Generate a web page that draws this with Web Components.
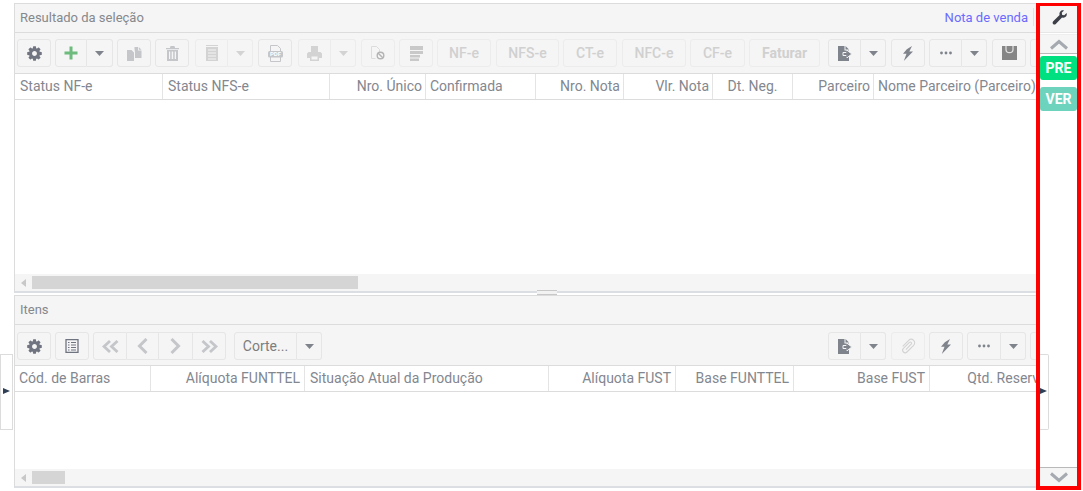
<!DOCTYPE html>
<html lang="pt"><head><meta charset="utf-8"><title>Nota de venda</title>
<style>html,body{margin:0;height:491px;overflow:hidden;background:#fff;font-family:Roboto,"Liberation Sans",sans-serif}</style>
</head><body>
<x-app>
  <x-panel slot="main" title-text="Resultado da seleção" link="Nota de venda" body="174" thumb="326">
    <x-toolbar>
      <x-btn w="34" icon="gear"></x-btn>
      <x-btn w="32" icon="plus" ml="4" group="l"></x-btn><x-btn w="26" icon="caret" group="r"></x-btn>
      <x-btn w="34" icon="copy" ml="4" off="1"></x-btn>
      <x-btn w="34" icon="trash" ml="4" off="1"></x-btn>
      <x-btn w="33" icon="lines" ml="6" group="l" off="2"></x-btn><x-btn w="25" icon="caret" group="r" off="2"></x-btn>
      <x-btn w="34" icon="pdf" ml="5" off="1"></x-btn>
      <x-btn w="33" icon="print" ml="6" group="l" off="2"></x-btn><x-btn w="25" icon="caret" group="r" off="2"></x-btn>
      <x-btn w="34" icon="nodoc" ml="5" off="2"></x-btn>
      <x-btn w="34" icon="stack" ml="4" off="2"></x-btn>
      <x-btn w="54" ml="4" off="2">NF-e</x-btn>
      <x-btn w="63" ml="5" off="2">NFS-e</x-btn>
      <x-btn w="54" ml="4" off="2">CT-e</x-btn>
      <x-btn w="64" ml="5" off="2">NFC-e</x-btn>
      <x-btn w="55" ml="4" off="2">CF-e</x-btn>
      <x-btn w="71" ml="4" off="2" bold="1">Faturar</x-btn>
      <x-btn w="33" icon="export" ml="8" group="l"></x-btn><x-btn w="25" icon="caret" group="r"></x-btn>
      <x-btn w="34" icon="bolt" ml="5"></x-btn>
      <x-btn w="33" icon="dots" ml="4" group="l"></x-btn><x-btn w="25" icon="caret" group="r"></x-btn>
      <x-btn w="34" icon="bag" ml="5"></x-btn>
      <x-btn w="34" ml="4"></x-btn>
    </x-toolbar>
    <x-grid-head cols="148:l5:Status NF-e,167:l5:Status NFS-e,96:r3:Nro. Único,110:l4:Confirmada,88:r3:Nro. Nota,89:r3:Vlr. Nota,80:ctr:Dt. Neg.,81:r3:Parceiro,200:l4:Nome Parceiro (Parceiro)"></x-grid-head>
  </x-panel>
  <x-splitter slot="main"></x-splitter>
  <x-panel slot="main" title-text="Itens" body="77" thumb="33">
    <x-toolbar top="7">
      <x-btn w="34" icon="gear"></x-btn>
      <x-btn w="34" icon="sheet" ml="4"></x-btn>
      <x-btn w="34" icon="first" ml="4" group="l" off="1"></x-btn><x-btn w="32" icon="prev" group="m" off="1"></x-btn><x-btn w="34" icon="next" group="m" off="1"></x-btn><x-btn w="33" icon="last" group="r" off="1"></x-btn>
      <x-btn w="63" ml="8" group="l" plain="1">Corte...</x-btn><x-btn w="25" icon="caret" group="r"></x-btn>
      <x-btn w="33" icon="export" ml="506" group="l"></x-btn><x-btn w="25" icon="caret" group="r"></x-btn>
      <x-btn w="34" icon="clip" ml="5" off="2"></x-btn>
      <x-btn w="34" icon="bolt" ml="4"></x-btn>
      <x-btn w="34" icon="dots" ml="4" group="l"></x-btn><x-btn w="25" icon="caret" group="r"></x-btn>
      <x-btn w="34" ml="4"></x-btn>
    </x-toolbar>
    <x-grid-head cols="136:l4:Cód. de Barras,154:r4:Alíquota FUNTTEL,244:l5:Situação Atual da Produção,127:r4:Alíquota FUST,118:r4:Base FUNTTEL,136:r4:Base FUST,137:r4:Qtd. Reservada"></x-grid-head>
  </x-panel>
  <x-sidebar slot="side">
    <x-badge color="#00e080">PRE</x-badge>
    <x-badge color="#6dd3bd">VER</x-badge>
  </x-sidebar>
  <x-handle slot="over" side="left"></x-handle>
  <x-handle slot="over" side="right"></x-handle>
</x-app>
<script>
const ICONS={
gear:'<svg width="17" height="17" viewBox="0 0 1792 1792"><path fill="#6f7480" d="M1152 896q0-106-75-181t-181-75-181 75-75 181 75 181 181 75 181-75 75-181zm512-109v222q0 12-8 23t-20 13l-185 28q-19 54-39 91 35 50 107 138 10 12 10 25t-9 23q-27 37-99 108t-94 71q-12 0-26-9l-138-108q-44 23-91 38-16 136-29 186-7 28-36 28h-222q-14 0-24.500-8.500t-11.500-21.500l-28-184q-49-16-90-37l-141 107q-10 9-25 9-14 0-25-11-126-114-165-168-7-10-7-23 0-12 8-23 15-21 51-66.500t54-70.500q-27-50-41-99l-183-27q-13-2-21-12.500t-8-23.500v-222q0-12 8-23t19-13l186-28q14-46 39-92-40-57-107-138-10-12-10-24 0-10 9-23 26-36 98.500-107.500t94.500-71.500q13 0 26 10l138 107q44-23 91-38 16-136 29-186 7-28 36-28h222q14 0 24.500 8.500t11.500 21.500l28 184q49 16 90 37l142-107q9-9 24-9 13 0 25 10 129 119 165 170 7 8 7 22 0 12-8 23-15 21-51 66.500t-54 70.500q26 50 41 98l183 28q13 2 21 12.500t8 23.500z"/></svg>',
plus:'<svg width="14" height="14" viewBox="0 0 14 14"><path fill="#6dbb7d" d="M5.500 .5h3v5H13.500v3H8.500v5h-3v-5H.5v-3h5z"/></svg>',
caret:'<svg width="9" height="5" viewBox="0 0 9 5"><path fill="currentColor" d="M0 0h9L4.500 5z"/></svg>',
copy:'<svg width="15" height="15" viewBox="0 0 15 15"><path fill="currentColor" d="M0 4h4.500l2.500 2.500V15H0zM7.500 3V1h3.500v3.500h3.500V12H8V6z"/><path fill="currentColor" d="M11.800 1l2.700 2.800h-2.700z"/></svg>',
trash:'<svg width="13" height="15" viewBox="0 0 13 15"><path fill="currentColor" d="M4.500 0h4l.6 2H13v1.300H0V2h3.900zM1 4h11v11H1zm2 1.500V13h1.200V5.500zm2.700 0V13h1.500V5.500zm3 0V13H10V5.500z" fill-rule="evenodd"/></svg>',
lines:'<svg width="12" height="16" viewBox="0 0 12 16"><path fill="currentColor" fill-rule="evenodd" d="M0 0h12v1H0zM0 2h12v14H0zM2 4.500v1h8v-1zm0 3v1h8v-1zm0 3v1h8v-1zm0 3v1h8v-1z"/></svg>',
pdf:'<svg width="15" height="17" viewBox="0 0 15 17"><path fill="none" stroke="currentColor" d="M2.500 6V.5h7l3 3V6M2.500 12v4.500h10V12"/><rect y="6" width="15" height="6.500" rx="1.500" fill="currentColor"/><text x="7.500" y="11.300" font-size="6" font-family="Roboto" font-weight="700" text-anchor="middle" fill="#fff">PDF</text></svg>',
print:'<svg width="15" height="15" viewBox="0 0 15 15"><path fill="currentColor" d="M4 0h7v6h2.500L15 7.500V12h-3v3H3v-3H0V7.500L1.500 6H4zm.5 10.500V13.500h6v-3z" fill-rule="evenodd"/></svg>',
nodoc:'<svg width="14" height="14" viewBox="0 0 14 14"><path fill="none" stroke="#dcdcdc" d="M.5.5h5l3 3v3M.5.5v12h4"/><circle cx="9.500" cy="9.500" r="3.300" fill="none" stroke="#b4b4b4" stroke-width="1.400"/><path d="M7.200 7.200l4.600 4.600" stroke="#b4b4b4" stroke-width="1.400"/></svg>',
stack:'<svg width="13" height="15" viewBox="0 0 13 15"><path fill="#c9c9c9" d="M0 0h13v4H0zM0 5h13v3H0zM0 9h10v2.500H0zM0 12.500h9V15H0z"/></svg>',
export:'<svg width="14" height="15" viewBox="0 0 14 15"><path fill="currentColor" d="M0 0h6.500v4.500H11V15H0z"/><path fill="currentColor" d="M7.500 0L11 3.500H7.500z"/><path fill="currentColor" stroke="#f5f5f5" stroke-width="1" d="M5 6.500h4V4.200l4.800 3.800L9 11.800V9.500H5z"/><path stroke="currentColor" stroke-width="1.500" d="M9 5v6"/></svg>',
bolt:'<svg width="10" height="15" viewBox="0 0 10 15"><path fill="currentColor" d="M9 0L6.300 5.500H10L.8 15l2.700-7.200H0L3.800 3.300z"/></svg>',
dots:'<svg width="12" height="4" viewBox="0 0 12 4"><circle cx="1.500" cy="2" r="1.400" fill="currentColor"/><circle cx="6" cy="2" r="1.400" fill="currentColor"/><circle cx="10.500" cy="2" r="1.400" fill="currentColor"/></svg>',
bag:'<svg width="15" height="14" viewBox="0 0 15 14"><rect width="15" height="14" fill="#868686"/><path fill="none" stroke="#e2e2e2" stroke-width="1.200" d="M4 0v3.500c0 4.200 7 4.200 7 0V0"/></svg>',
sheet:'<svg width="14" height="14" viewBox="0 0 14 14"><path fill="none" stroke="#6f7480" stroke-width="1.300" d="M1 .7h12v12.600H1z"/><path stroke="#6f7480" stroke-width="1.200" d="M3 3.500h1.500M6 3.500h5M3 6h1.500M6 6h5M3 8.500h1.500M6 8.500h5M3 11h1.500M6 11h5"/></svg>',
first:'<svg width="17" height="13" viewBox="0 0 17 13"><path fill="none" stroke="currentColor" stroke-width="2.800" d="M8 1L2 6.500 8 12M15.500 1L9.500 6.500l6 5.500"/></svg>',
prev:'<svg width="11" height="16" viewBox="0 0 11 16"><path fill="none" stroke="currentColor" stroke-width="3" d="M9.500 1L2.500 8l7 7"/></svg>',
next:'<svg width="11" height="16" viewBox="0 0 11 16"><path fill="none" stroke="currentColor" stroke-width="3" d="M1.500 1l7 7-7 7"/></svg>',
last:'<svg width="17" height="13" viewBox="0 0 17 13"><path fill="none" stroke="currentColor" stroke-width="2.800" d="M1.500 1l6 5.500-6 5.500M9 1l6 5.500L9 12"/></svg>',
clip:'<svg width="18" height="18" viewBox="0 0 18 18"><g transform="rotate(45 9 9)"><path fill="none" stroke="currentColor" stroke-width="1.100" d="M5.500 13V4.500a3.500 3.500 0 0 1 7 0V14a2.500 2.500 0 0 1-5 0V5.500a1.200 1.200 0 0 1 2.500 0V13"/></g></svg>',
wrench:'<svg width="15" height="15" viewBox="0 0 16 16"><path fill="#3c3f47" d="M15.600 3.200c.5 1.800-.1 3.400-1.400 4.300-1.100.7-2.400.8-3.500.4L4 14.800c-.8.900-2.100.9-2.800.1-.8-.8-.7-2 .1-2.800L8.100 5.300C7.700 4.100 7.900 2.800 8.700 1.800 9.700.5 11.300 0 12.800.5L10.400 3l.5 2.200 2.200.5z"/></svg>'
};
class Base extends HTMLElement{
  constructor(){super();this.attachShadow({mode:'open'});}
}
customElements.define('x-app',class extends Base{connectedCallback(){this.shadowRoot.innerHTML=`<style>
:host{display:flex;position:relative;height:491px;box-sizing:border-box;padding:3px 2px 0 14px;overflow:hidden}
.main{flex:1;min-width:0;display:flex;flex-direction:column;overflow:hidden}
</style><div class="main"><slot name="main"></slot></div><slot name="side"></slot><slot name="over"></slot>`;}});
customElements.define('x-panel',class extends Base{connectedCallback(){
  const g=n=>this.getAttribute(n);
  const link=g('link')?`<span class="link">${g('link')}</span><span class="sep"></span>`:'';
  this.shadowRoot.innerHTML=`<style>
:host{display:block;flex:none;border-left:1px solid #dcdcdc;border-top:1px solid #dcdcdc;border-bottom:2px solid #dbdfe3}
.title{height:26px;padding:0 0 2px 5px;background:#f5f5f5;border-bottom:1px solid #dcdcdc;display:flex;align-items:center;font-size:13px;color:#85888d}
.link{margin-left:auto;color:#6a6aff}
.sep{width:1px;height:18px;background:#e2e2e2;margin:0 2px 0 5px}
.body{height:${g('body')}px;background:#fff}
.scroll{height:17px;background:#f5f5f5;display:flex;align-items:center}
.arr{width:0;height:0;border:4px solid transparent;border-right:5px solid #c8c8c8;border-left:0;margin-left:6px}
.thumb{height:13px;width:${g('thumb')}px;background:#d5d5d5;margin-left:6px}
</style><div class="title"><span>${g('title-text')}</span>${link}</div><slot></slot><div class="body"></div><div class="scroll"><i class="arr"></i><i class="thumb"></i></div>`;
}});
customElements.define('x-toolbar',class extends Base{connectedCallback(){
  const t=this.getAttribute('top')||6;
  this.shadowRoot.innerHTML=`<style>:host{display:flex;align-items:flex-start;height:41px;box-sizing:border-box;padding:${t}px 0 0 2px;background:#f5f5f5;border-bottom:1px solid #dcdcdc;overflow:hidden}</style><slot></slot>`;
}});
customElements.define('x-btn',class extends Base{connectedCallback(){
  const g=n=>this.getAttribute(n),grp=g('group'),off=g('off');
  const col=off==='2'?'#d3d3d3':off==='1'?'#c4c6ca':'#7f838c';
  const tc=off==='2'?'#d0d0d0':'#7d7d7d';
  const rad=grp==='l'?'3px 0 0 3px':grp==='r'?'0 3px 3px 0':grp==='m'?'0':'3px';
  const noLeft=grp==='r'||grp==='m';
  const bor=off==='2'?'#ececec':'#e6e6e6';
  this.shadowRoot.innerHTML=`<style>
:host{display:flex;flex:none;align-items:center;justify-content:center;box-sizing:border-box;width:${g('w')}px;height:28px;margin-left:${g('ml')||0}px;background:#f5f5f5;border:1px solid ${bor};${noLeft?'border-left:0;':''}border-radius:${rad};color:${g('icon')?col:tc};font:${g('bold')?'700':'500'} 14px Roboto,sans-serif;${g('plain')?'font-weight:400;':''}}
svg{display:block}
</style>${ICONS[g('icon')]||'<slot></slot>'}`;
}});
customElements.define('x-grid-head',class extends Base{connectedCallback(){
  const cells=this.getAttribute('cols').split(',').map(c=>{const [w,a,t]=c.split(':');return `<div class="cell ${a}" style="width:${w}px">${t}</div>`}).join('');
  this.shadowRoot.innerHTML=`<style>
:host{display:flex;height:26px;box-sizing:border-box;background:#fff;border-bottom:1px solid #dcdcdc;overflow:hidden;font-size:14px;color:#83878f}
.cell{flex:none;box-sizing:border-box;height:25px;line-height:25px;border-right:1px solid #e4e4e4;white-space:nowrap;overflow:hidden}
.l4{padding-left:4px}.l5{padding-left:5px}.r3{padding-right:3px;text-align:right}.r4{padding-right:4px;text-align:right}.ctr{text-align:center}
</style>${cells}`;
}});
customElements.define('x-splitter',class extends Base{connectedCallback(){
  this.shadowRoot.innerHTML=`<style>:host{display:block;flex:none;height:2px;position:relative}
i{position:absolute;left:523px;top:-3px;width:20px;height:3px;border-top:1px solid #c8c8c8;border-bottom:1px solid #c8c8c8;background:#f2f2f2}</style><i></i>`;
}});
customElements.define('x-sidebar',class extends Base{connectedCallback(){
  const chev=d=>`<svg width="20" height="11" viewBox="0 0 20 11"><path fill="none" stroke="#a5a9b0" stroke-width="3" d="${d}"/></svg>`;
  this.shadowRoot.innerHTML=`<style>
:host{display:flex;flex:none;flex-direction:column;box-sizing:border-box;width:45px;height:487px;border:4px solid #f00;border-top-width:3px;background:#fff;position:relative;z-index:1}
.w{flex:none;height:22px;padding:0 0 4px 1px;background:#f5f5f5;display:flex;align-items:center;justify-content:center;border-bottom:1px solid #e6e6e6}
.a{flex:none;display:flex;align-items:center;justify-content:center;background:#f5f5f5;padding-left:1px}
.up{height:18px;margin-top:1px;border-bottom:1px solid #b9b9b9;margin-bottom:2px;border-top:1px solid #eee}
.dn{height:18px;margin-top:auto;border-top:1px solid #b9b9b9}
</style><div class="w">${ICONS.wrench}</div><div class="a up">${chev('M2 9.500l8-7 8 7')}</div><slot></slot><div class="a dn">${chev('M2 1.500l8 7 8-7')}</div>`;
}});
customElements.define('x-badge',class extends Base{connectedCallback(){
  this.shadowRoot.innerHTML=`<style>:host{display:flex;flex:none;align-items:center;justify-content:center;height:24px;margin-bottom:7px;background:${this.getAttribute('color')};border-radius:3px;color:#fff;font:700 14px Roboto,sans-serif}</style><slot></slot>`;
}});
customElements.define('x-handle',class extends Base{connectedCallback(){
  const left=this.getAttribute('side')==='left';
  this.shadowRoot.innerHTML=`<style>
:host{position:absolute;top:354px;height:76px;box-sizing:border-box;${left?'left:0;width:13px;border:1px solid #dcdcdc;':'left:1040px;width:9px;border:1px solid #dcdcdc;border-left:0;border-radius:0 2px 2px 0;z-index:2;background:#fff;'}display:block}
i{position:absolute;top:33px;${left?'left:2px':'left:0'};width:0;height:0;border:3.500px solid transparent;border-left:7px solid #2f3f55;border-right:0}
</style><i></i>`;
}});
</script>
</body></html>
